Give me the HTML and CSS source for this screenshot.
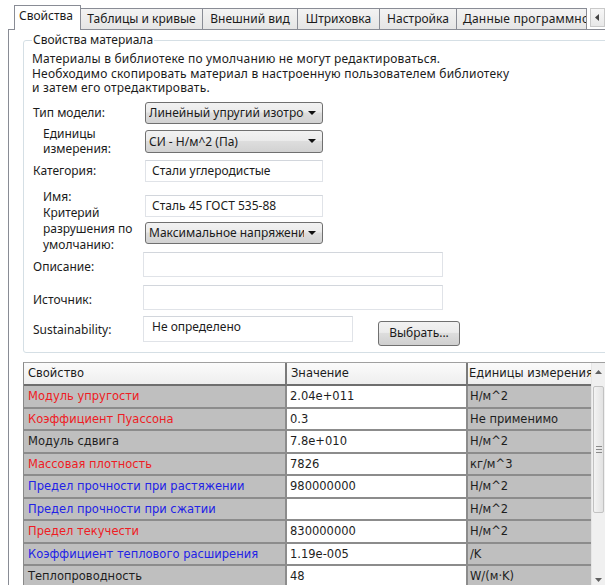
FILE: index.html
```html
<!DOCTYPE html>
<html lang="ru">
<head>
<meta charset="utf-8">
<title>Свойства материала</title>
<link rel="stylesheet" href="styles.css">
</head>
<body>
<div class="window">
  <div class="tabs">
    <div class="tab active w1">Свойства</div>
    <div class="tab w2">Таблицы и кривые</div>
    <div class="tab w3">Внешний вид</div>
    <div class="tab w4">Штриховка</div>
    <div class="tab w5">Настройка</div>
    <div class="tab w6">Данные программного обеспечения</div>
    <div class="tab-scroll">
      <svg width="5" height="7" viewBox="0 0 5 7"><path d="M4 0 L0 3.5 L4 7 Z" fill="#444"/></svg>
    </div>
  </div>

  <div class="pane">
    <fieldset class="group">
      <legend>Свойства материала</legend>
      <p class="note">Материалы в библиотеке по умолчанию не могут редактироваться.<br>Необходимо скопировать материал в настроенную пользователем библиотеку<br>и затем его отредактировать.</p>

      <div class="row row-a">
        <div class="lbl">Тип модели:</div>
        <div class="combo"><span class="combo-text">Линейный упругий изотропный</span><span class="arrow"></span></div>
      </div>

      <div class="row row-b">
        <div class="lbl indent two">Единицы<br>измерения:</div>
        <div class="combo"><span class="combo-text">СИ - Н/м^2 (Па)</span><span class="arrow"></span></div>
      </div>

      <div class="row row-c">
        <div class="lbl">Категория:</div>
        <div class="field">Стали углеродистые</div>
      </div>

      <div class="row row-d">
        <div class="lbl indent stack">Имя:<br>Критерий<br>разрушения по<br>умолчанию:</div>
        <div class="stack-ctrl">
          <div class="field name">Сталь 45 ГОСТ 535-88</div>
          <div class="combo"><span class="combo-text">Максимальное напряжение по Мизесу</span><span class="arrow"></span></div>
        </div>
      </div>

      <div class="row row-e">
        <div class="lbl">Описание:</div>
        <div class="field wide"></div>
      </div>

      <div class="row row-f">
        <div class="lbl">Источник:</div>
        <div class="field wide"></div>
      </div>

      <div class="row row-g">
        <div class="lbl">Sustainability:</div>
        <div class="field mid">Не определено</div>
        <div class="button">Выбрать...</div>
      </div>
    </fieldset>

    <div class="table-box">
      <div class="grid">
        <div class="th">Свойство</div>
        <div class="th">Значение</div>
        <div class="th">Единицы измерения</div>

        <div class="td key red">Модуль упругости</div>
        <div class="td val">2.04e+011</div>
        <div class="td unit">Н/м^2</div>

        <div class="td key red">Коэффициент Пуассона</div>
        <div class="td val">0.3</div>
        <div class="td unit">Не применимо</div>

        <div class="td key">Модуль сдвига</div>
        <div class="td val">7.8e+010</div>
        <div class="td unit">Н/м^2</div>

        <div class="td key red">Массовая плотность</div>
        <div class="td val">7826</div>
        <div class="td unit">кг/м^3</div>

        <div class="td key blue">Предел прочности при растяжении</div>
        <div class="td val">980000000</div>
        <div class="td unit">Н/м^2</div>

        <div class="td key blue">Предел прочности при сжатии</div>
        <div class="td val"></div>
        <div class="td unit">Н/м^2</div>

        <div class="td key red">Предел текучести</div>
        <div class="td val">830000000</div>
        <div class="td unit">Н/м^2</div>

        <div class="td key blue">Коэффициент теплового расширения</div>
        <div class="td val">1.19e-005</div>
        <div class="td unit">/K</div>

        <div class="td key">Теплопроводность</div>
        <div class="td val">48</div>
        <div class="td unit">W/(м·K)</div>
      </div>
      <div class="vscroll">
        <div class="sb-btn up"><svg width="7" height="4" viewBox="0 0 7 4"><path d="M0 4 L3.5 0 L7 4 Z" fill="#606060"/></svg></div>
        <div class="sb-thumb"><span></span><span></span><span></span></div>
        <div class="sb-track"></div>
        <div class="sb-btn down"><svg width="7" height="4" viewBox="0 0 7 4"><path d="M0 0 L7 0 L3.5 4 Z" fill="#606060"/></svg></div>
      </div>
    </div>
  </div>
</div>
</body>
</html>
```

FILE: styles.css
```css
* { box-sizing: border-box; }

html, body {
  margin: 0;
  padding: 0;
}

body {
  width: 605px;
  height: 585px;
  overflow: hidden;
  background: #fff;
  font-family: "Noto Sans", "Open Sans", sans-serif;
  font-size: 12px;
  color: #1b1b1b;
}

.window {
  width: 605px;
  height: 585px;
  overflow: hidden;
}

/* ---- tab strip ---- */
.tabs {
  display: flex;
  align-items: flex-end;
  height: 29px;
  padding-left: 14px;
  white-space: nowrap;
}

.tab {
  height: 21px;
  line-height: 19px;
  padding: 0 6px;
  border: 1px solid #898c95;
  border-left: none;
  border-bottom: none;
  background: linear-gradient(#f3f3f3, #e5e5e5);
  text-align: center;
  overflow: hidden;
}

.tab.active {
  height: 25px;
  line-height: 20px;
  margin-bottom: -1px;
  border-left: 1px solid #898c95;
  background: #fff;
  position: relative;
  z-index: 1;
  padding: 0 4px;
  text-align: left;
}

.w1 { width: 67px; }
.w2 { width: 122px; }
.w3 { width: 95px; }
.w4 { width: 82px; }
.w5 { width: 77px; }
.w6 { width: 130px; text-align: left; letter-spacing: 0.2px; }

.tab-scroll {
  width: 15px;
  height: 19px;
  margin: 0 0 2px 3px;
  border: 1px solid #c9c9c9;
  background: linear-gradient(#f7f7f7, #e8e8e8);
  display: flex;
  align-items: center;
  justify-content: center;
}

/* ---- tab page ---- */
.pane {
  margin-left: 8px;
  border-left: 1px solid #898c95;
  border-top: 1px solid #898c95;
  padding: 3px 0 0 14px;
  height: 556px;
}

.group {
  margin: 0 -10px 0 0;
  height: 320px;
  border: 1px solid #d5dfe5;
  border-radius: 3px;
  padding: 0 0 0 8px;
}

.group legend {
  padding: 0 1px;
  line-height: 14px;
  color: #1b1b1b;
}

.note {
  margin: 5px 0 0;
  line-height: 14.5px;
  letter-spacing: 0.2px;
}

.row {
  display: flex;
  align-items: center;
}

.lbl {
  width: 113px;
  flex: none;
  padding-left: 1px;
  line-height: 15px;
}

.lbl.indent { padding-left: 11px; }

.row-a { margin-top: 6px; height: 22px; }
.row-b { margin-top: 6px; height: 23px; }
.row-c { margin-top: 7px; height: 22px; }
.row-d { margin-top: 7px; height: 63px; align-items: flex-start; }
.row-e { height: 25px; }
.row-f { margin-top: 8px; height: 25px; }
.row-g { margin-top: 6px; height: 26px; align-items: flex-start; }

.row-e .lbl, .row-f .lbl { padding-top: 5px; }
.row-g .lbl { padding-top: 6px; }

.lbl.stack { line-height: 16px; height: 63px; }
.stack-ctrl { display: flex; flex-direction: column; }

/* combo box */
.combo {
  width: 178px;
  height: 22px;
  border: 1px solid #707070;
  border-radius: 3px;
  background: linear-gradient(#f2f2f2 0%, #ebebeb 45%, #dddddd 50%, #d2d2d2 100%);
  display: flex;
  align-items: center;
  padding-left: 3px;
  position: relative;
}
.row-b .combo { height: 23px; }

.combo-text {
  width: 155px;
  overflow: hidden;
  white-space: nowrap;
}

.arrow {
  position: absolute;
  right: 6px;
  top: 8px;
  width: 0;
  height: 0;
  border-left: 4px solid transparent;
  border-right: 4px solid transparent;
  border-top: 4px solid #111;
}

/* text field */
.field {
  width: 178px;
  height: 22px;
  border: 1px solid #e0e3e8;
  border-top-color: #d2d6dc;
  background: #fff;
  padding-left: 6px;
  line-height: 20px;
  white-space: nowrap;
}
.field.name { margin-top: 6px; margin-bottom: 5px; }
.field.wide { width: 300px; height: 25px; margin-left: -2px; }
.field.mid { width: 210px; height: 26px; margin-left: -2px; line-height: 19px; padding-left: 8px; }

.button {
  margin: 5px 0 0 25px;
  width: 82px;
  height: 25px;
  border: 1px solid #707070;
  border-radius: 3px;
  background: linear-gradient(#f2f2f2 0%, #ebebeb 45%, #dddddd 50%, #cfcfcf 100%);
  text-align: center;
  line-height: 22px;
}

/* ---- properties table ---- */
.table-box {
  margin-top: 9px;
  display: flex;
  width: 582px;
  border-top: 1px solid #a0a0a0;
  border-left: 1px solid #8a8a8a;
}

.grid {
  display: grid;
  grid-template-columns: 263px 181px 123px;
  grid-auto-rows: 22.5px;
  grid-template-rows: 23px;
  font-family: "DejaVu Sans", sans-serif;
  font-size: 11.5px;
}

.th, .td {
  white-space: nowrap;
  overflow: hidden;
  line-height: 20px;
  padding-left: 3px;
}

.th {
  background: linear-gradient(#fbfbfb, #eeeeee);
  border-right: 2px solid #7a7a7a;
  border-bottom: 2px solid #6e6e6e;
  color: #1b1b1b;
  padding-left: 4px;
}
.th:nth-child(3) { border-right: none; padding-left: 1px; }

.td {
  border-bottom: 2px solid #8c8c8c;
  color: #1e1e1e;
}

.key {
  background: #bfbfbf;
  border-right: 2px solid #8c8c8c;
  padding-left: 4px;
}
.val { background: #fff; border-right: 2px solid #8c8c8c; }
.unit { background: #bfbfbf; padding-left: 2px; }

.red { color: #ee1c24; }
.blue { color: #2222e6; }

.vscroll {
  width: 15px;
  display: flex;
  flex-direction: column;
  background: #f0f0f0;
  border-left: 1px solid #e6e6e6;
}

.sb-btn {
  height: 17px;
  display: flex;
  align-items: center;
  justify-content: center;
}

.sb-thumb {
  margin: 6px 1px 0;
  height: 127px;
  border: 1px solid #c2c2c2;
  border-radius: 2px;
  background: linear-gradient(90deg, #f3f3f3, #e2e2e2);
  display: flex;
  flex-direction: column;
  align-items: center;
  justify-content: center;
  gap: 2px;
}
.sb-thumb span {
  width: 6px;
  height: 1px;
  background: #8a8a8a;
}

.sb-track { flex: 1; }
```
